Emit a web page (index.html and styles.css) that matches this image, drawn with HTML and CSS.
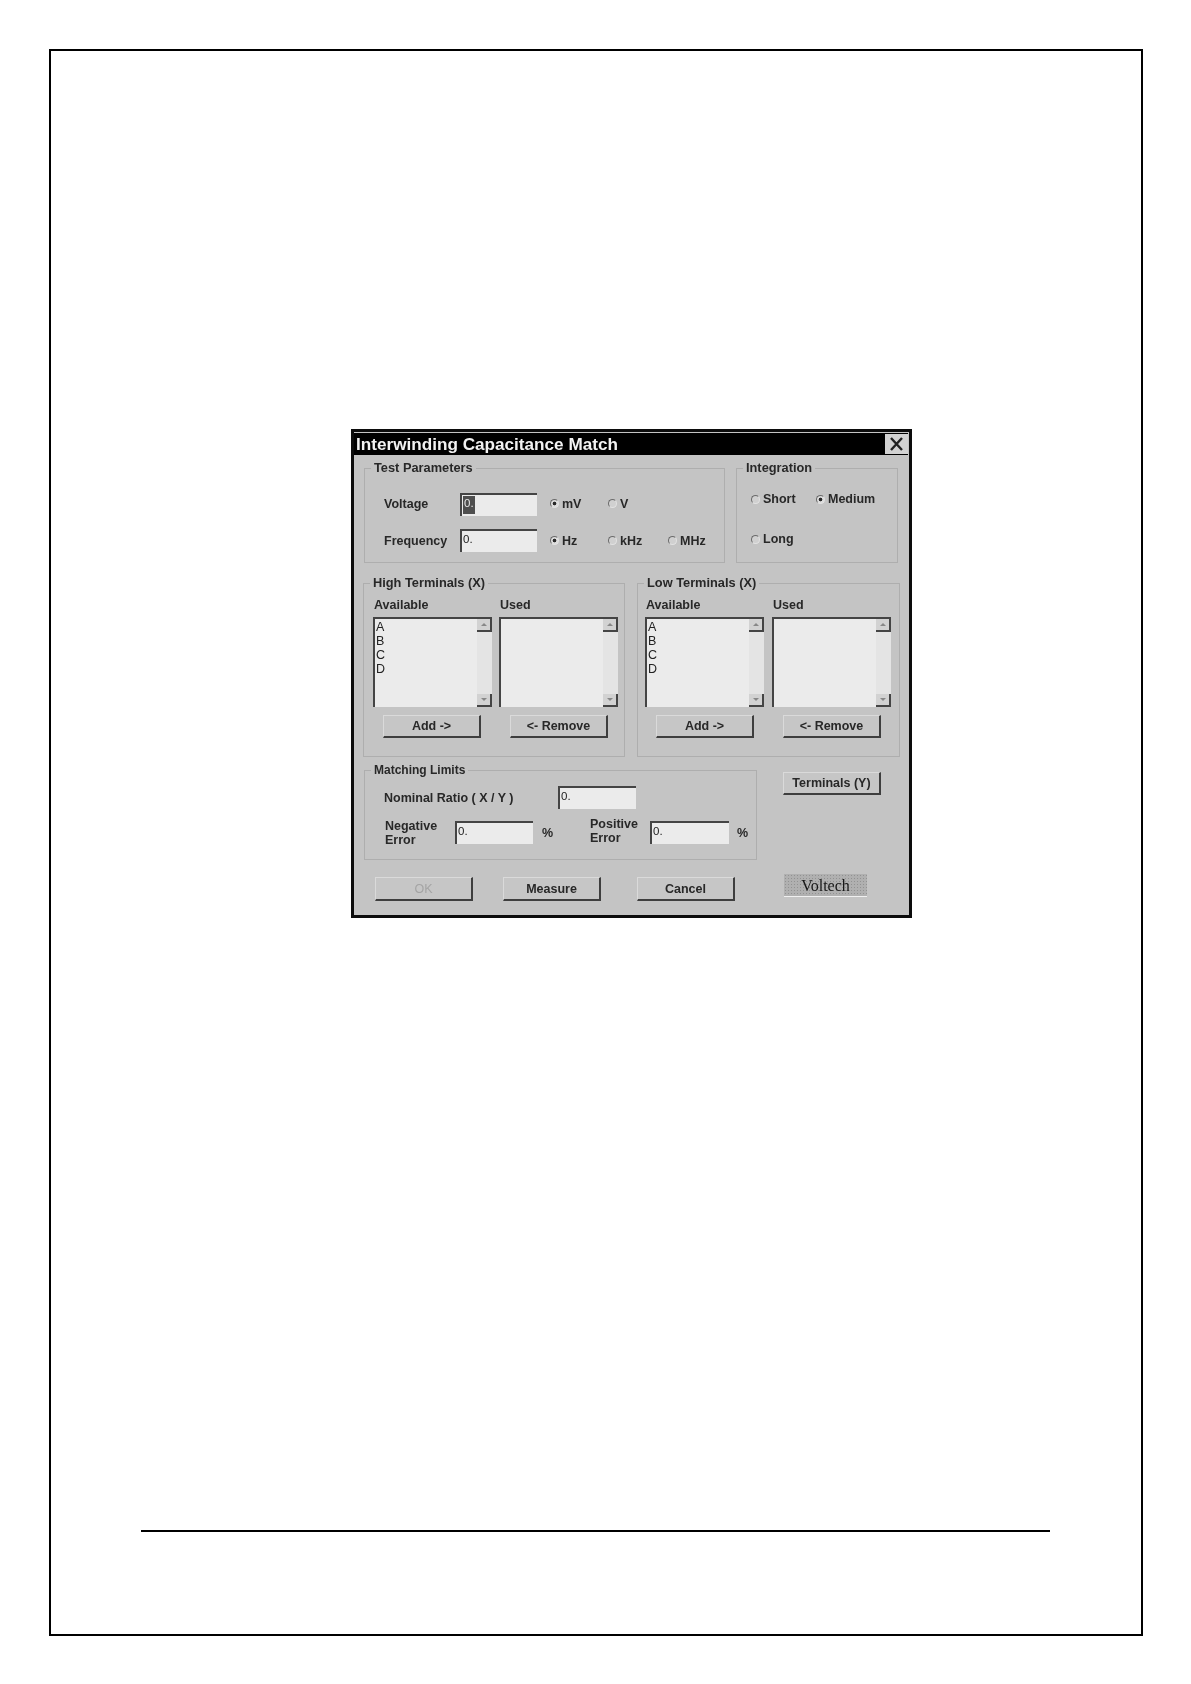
FILE: index.html
```html
<!DOCTYPE html>
<html lang="en">
<head>
<meta charset="utf-8">
<title>Interwinding Capacitance Match</title>
<link rel="stylesheet" href="styles.css">
</head>
<body>
<div class="page">
  <div class="dialog">
    <div class="titlebar">
      <span class="title">Interwinding Capacitance Match</span>
      <span class="close"><svg viewBox="0 0 23 20" width="23" height="20"><path d="M6 4 L17 16 M17 4 L6 16" stroke="#222" stroke-width="2.4" fill="none"/></svg></span>
    </div>

    <div class="row row-1">
      <fieldset class="group test">
        <legend>Test Parameters</legend>
        <div class="test-grid">
          <span class="label first">Voltage</span>
          <div class="field"><span class="selected">0.</span></div>
          <span class="opt opt-a first"><i class="radio on"></i>mV</span>
          <span class="opt first"><i class="radio"></i>V</span>
          <span></span>
          <span class="label">Frequency</span>
          <div class="field">0.</div>
          <span class="opt opt-a"><i class="radio on"></i>Hz</span>
          <span class="opt"><i class="radio"></i>kHz</span>
          <span class="opt"><i class="radio"></i>MHz</span>
        </div>
      </fieldset>
      <fieldset class="group integration">
        <legend>Integration</legend>
        <div class="int-grid">
          <span class="opt"><i class="radio"></i>Short</span>
          <span class="opt"><i class="radio on"></i>Medium</span>
          <span class="opt"><i class="radio"></i>Long</span>
        </div>
      </fieldset>
    </div>

    <div class="row row-2">
      <fieldset class="group terminals high">
        <legend>High Terminals (X)</legend>
        <div class="term-grid">
          <div class="term-col">
            <span class="label cap">Available</span>
            <div class="list">
              <div class="items"><span>A</span><span>B</span><span>C</span><span>D</span></div>
              <div class="scroll"><i class="sbtn up"></i><i class="sbtn down"></i></div>
            </div>
            <button class="btn add">Add -&gt;</button>
          </div>
          <div class="term-col">
            <span class="label cap">Used</span>
            <div class="list">
              <div class="items"></div>
              <div class="scroll"><i class="sbtn up"></i><i class="sbtn down"></i></div>
            </div>
            <button class="btn remove">&lt;- Remove</button>
          </div>
        </div>
      </fieldset>
      <fieldset class="group terminals low">
        <legend>Low Terminals (X)</legend>
        <div class="term-grid">
          <div class="term-col">
            <span class="label cap">Available</span>
            <div class="list">
              <div class="items"><span>A</span><span>B</span><span>C</span><span>D</span></div>
              <div class="scroll"><i class="sbtn up"></i><i class="sbtn down"></i></div>
            </div>
            <button class="btn add">Add -&gt;</button>
          </div>
          <div class="term-col">
            <span class="label cap">Used</span>
            <div class="list">
              <div class="items"></div>
              <div class="scroll"><i class="sbtn up"></i><i class="sbtn down"></i></div>
            </div>
            <button class="btn remove">&lt;- Remove</button>
          </div>
        </div>
      </fieldset>
    </div>

    <div class="row row-3">
      <fieldset class="group matching">
        <legend>Matching Limits</legend>
        <div class="nominal">
          <span class="label nominal-label">Nominal Ratio ( X / Y )</span>
          <div class="field w-nominal">0.</div>
        </div>
        <div class="errors">
          <span class="label neg-label">Negative<br>Error</span>
          <div class="field w-nominal">0.</div>
          <span class="label pct pct-neg">%</span>
          <span class="label pos-label">Positive<br>Error</span>
          <div class="field w-pos">0.</div>
          <span class="label pct pct-pos">%</span>
        </div>
      </fieldset>
      <button class="btn btn-y">Terminals (Y)</button>
    </div>

    <div class="row row-4">
      <button class="btn ok" disabled>OK</button>
      <button class="btn measure">Measure</button>
      <button class="btn cancel">Cancel</button>
      <div class="logo">Voltech</div>
    </div>
  </div>
  <div class="rule"></div>
</div>
</body>
</html>
```
FILE: styles.css
```css
* { box-sizing: border-box; }
html, body { margin: 0; background: #fff; }
.page {
  margin: 49px 0 0 49px;
  width: 1094px;
  height: 1587px;
  border: 2px solid #000;
  display: flex;
  flex-direction: column;
}
.dialog {
  margin: 378px 0 0 300px;
  width: 561px;
  border: 3px solid #0c0c0c;
  background: #c4c4c4;
  padding-bottom: 14px;
  font: bold 12.5px/14px "Liberation Sans", Arial, sans-serif;
  color: #282828;
  filter: blur(0.55px);
}
.titlebar {
  margin-top: 1px;
  height: 22px;
  margin-right: 1px;
  background: #000;
  display: flex;
  justify-content: space-between;
  align-items: center;
  padding-left: 2px;
}
.title { color: #f2f2f2; font-size: 17.15px; line-height: 22px; }
.close { width: 23px; height: 20px; background: #d2d2d2; display: block; }
.close svg { display: block; }

.row { display: flex; align-items: flex-start; }
.row-1 { margin: 6px 0 0 10px; gap: 11px; }
.row-2 { margin: 13px 0 0 9px; gap: 12px; }
.row-3 { margin: 6px 0 0 10px; }
.row-4 { margin: 14px 0 0 21px; height: 27px; }

.group {
  margin: 0;
  min-width: 0;
  border: 1px solid #aeaeae;
  padding: 0;
}
.group legend {
  margin-left: 6px;
  padding: 0 3px;
  font-size: 12.8px;
  line-height: 14px;
}
.group.matching legend { font-size: 12px; }
.test { width: 361px; height: 102px; padding-top: 18px; }
.integration { width: 162px; height: 102px; padding-top: 17px; }
.terminals { height: 181px; padding-top: 8px; }
.high { width: 262px; }
.low { width: 263px; }
.matching { width: 393px; height: 97px; padding-top: 9px; }

.test-grid {
  display: grid;
  margin-left: 19px;
  grid-template-columns: 76px 77px 71px 60px auto;
  grid-auto-rows: 23px;
  row-gap: 13px;
  align-items: center;
}
.test-grid .first { padding-bottom: 2px; }
.test-grid .opt-a { margin-left: 13px; }
.int-grid {
  display: grid;
  margin-left: 14px;
  grid-template-columns: 65px auto;
  grid-auto-rows: 14px;
  row-gap: 26px;
}
.opt { display: flex; align-items: center; white-space: nowrap; }
.radio {
  display: block;
  flex: none;
  width: 9px;
  height: 9px;
  margin-right: 3px;
  border-radius: 50%;
  border: 1px solid;
  border-color: #6a6a6a #e2e2e2 #e2e2e2 #6a6a6a;
  background: #d0d0d0;
}
.radio.on { background: radial-gradient(circle, #2a2a2a 0 1.5px, #dcdcdc 2.2px); }

.field {
  height: 23px;
  border-top: 2px solid #444;
  border-left: 2px solid #444;
  background: #ebebeb;
  padding: 1px 0 0 1px;
  font: 11.5px/14px "Liberation Sans", Arial, sans-serif;
  color: #222;
}
.selected { display: inline-block; background: #4e4e4e; color: #e8e8e8; padding: 0 1px; height: 18px; }
.w-nominal { width: 78px; flex: none; }
.w-pos { width: 79px; flex: none; }

.term-grid { display: flex; gap: 7px; margin-left: 9px; }
.low .term-grid { gap: 8px; margin-left: 7px; }
.term-col { width: 119px; display: flex; flex-direction: column; align-items: flex-start; }
.cap { margin: 0 0 5px 1px; height: 14px; }
.list {
  width: 119px;
  height: 90px;
  flex: none;
  border-top: 2px solid #444;
  border-left: 2px solid #444;
  background: #ebebeb;
  display: flex;
}
.items {
  flex: 1;
  display: flex;
  flex-direction: column;
  padding: 1px 0 0 1px;
  font: 12.5px/14px "Liberation Sans", Arial, sans-serif;
  color: #222;
}
.scroll {
  width: 15px;
  background: #e4e4e4;
  display: flex;
  flex-direction: column;
  justify-content: space-between;
}
.sbtn {
  display: flex;
  align-items: center;
  justify-content: center;
  height: 13px;
  background: #d2d2d2;
  border-right: 2px solid #444;
  border-bottom: 2px solid #444;
}
.sbtn::before {
  content: "";
  border-left: 3px solid transparent;
  border-right: 3px solid transparent;
}
.up::before { border-bottom: 3px solid #888; }
.down::before { border-top: 3px solid #888; }

.btn {
  display: block;
  height: 23px;
  padding: 0;
  background: #c6c6c6;
  border-style: solid;
  border-width: 1px 2px 2px 1px;
  border-color: #dadada #3e3e3e #3e3e3e #dadada;
  font: bold 12.5px/14px "Liberation Sans", Arial, sans-serif;
  color: #282828;
}
.add, .remove { width: 98px; margin-top: 8px; margin-left: 10px; }
.remove { margin-left: 11px; }
.low .add { margin-left: 11px; }
.low .remove { margin-left: 11px; }

.nominal { display: flex; height: 23px; align-items: center; margin: 0 0 12px 19px; }
.nominal-label { width: 174px; }
.errors { display: flex; align-items: center; height: 23px; margin-left: 19px; }
.neg-label { width: 70px; margin-left: 1px; }
.pos-label { width: 60px; position: relative; top: -2px; }
.pct { width: 48px; }
.pct-neg { margin-left: 9px; }
.pct-pos { margin-left: 8px; width: auto; }

.btn-y { width: 98px; margin: 9px 0 0 26px; }
.row-4 .btn { margin-top: 3px; width: 98px; height: 24px; }
.row-4 .ok { color: #a4a4a4; font-weight: normal; }
.measure { margin-left: 30px; }
.cancel { margin-left: 36px; }
.logo {
  width: 83px;
  height: 23px;
  margin-left: 49px;
  padding-top: 1px;
  background-color: #b0b0b0;
  background-image: radial-gradient(#929292 0.7px, transparent 0.9px);
  background-size: 3px 3px;
  border-bottom: 1px solid #f0f0f0;
  font: 16px/22px "Liberation Serif", "Times New Roman", serif;
  color: #181818;
  text-align: center;
}
.rule { margin: 612px 0 0 90px; width: 909px; height: 2px; background: #000; flex: none; }
```
